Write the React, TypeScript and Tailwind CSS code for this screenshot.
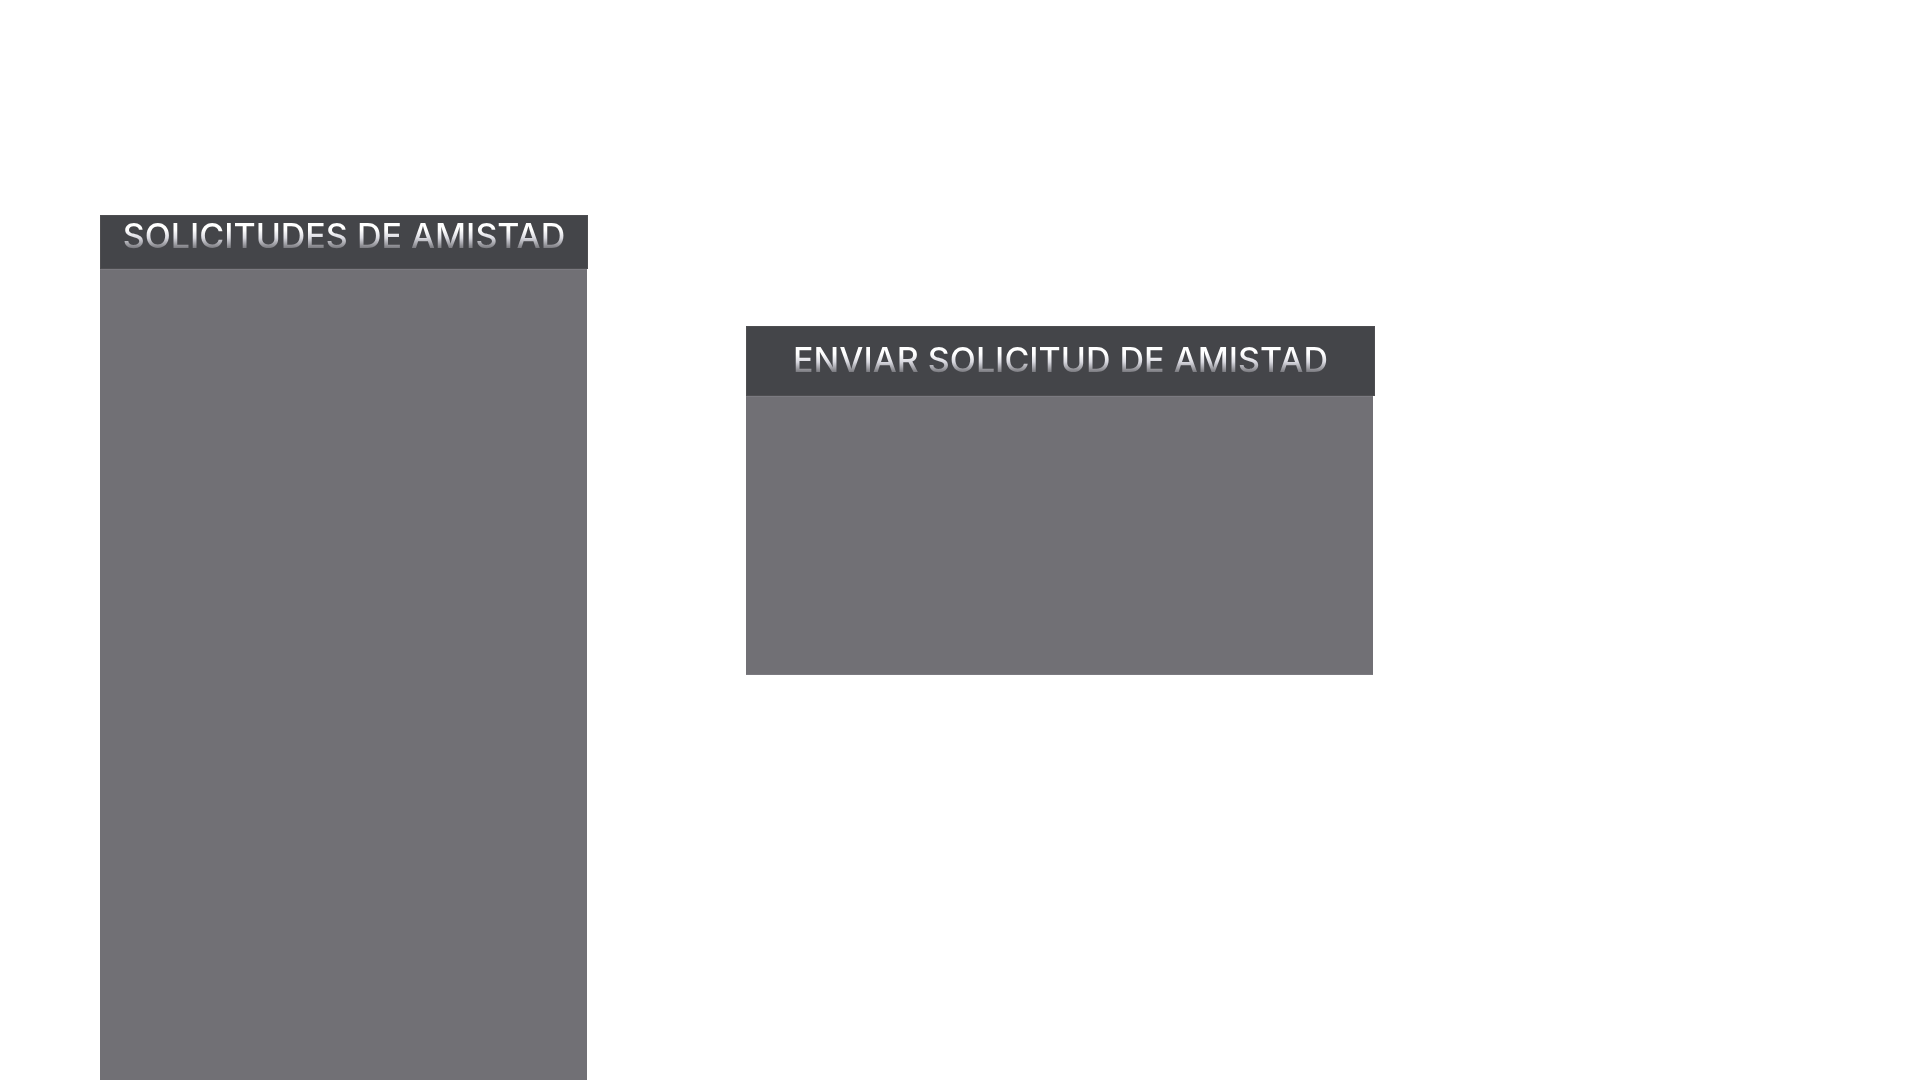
type PanelProps = {
  title: string;
  className: string;
  headerClassName: string;
  bodyClassName: string;
};

function Panel({ title, className, headerClassName, bodyClassName }: PanelProps) {
  return (
    <section className={`flex flex-col ${className}`}>
      <header
        className={`flex items-start justify-center border border-[#4e4e51] bg-[#444549] ${headerClassName}`}
      >
        <h2 className="whitespace-nowrap bg-linear-to-b from-white from-35% via-[#d9d9e0] via-55% to-[#737378] to-82% bg-clip-text text-[34px] leading-10 font-medium text-transparent">
          {title}
        </h2>
      </header>
      <div className={`border-t border-[#7b7a80] bg-[#717075] ${bodyClassName}`} />
    </section>
  );
}

export default function App() {
  return (
    <main className="grid min-h-screen grid-cols-[100fr_488fr_158fr_629fr_545fr] bg-white font-['Inter',sans-serif]">
      <Panel
        title="SOLICITUDES DE AMISTAD"
        className="col-start-2 pt-[215px]"
        headerClassName="h-[54px]"
        bodyClassName="mr-px flex-1"
      />
      <Panel
        title="ENVIAR SOLICITUD DE AMISTAD"
        className="col-start-4 pt-[326px]"
        headerClassName="h-[70px] pt-[13px]"
        bodyClassName="mr-0.5 h-[279px] border-b"
      />
    </main>
  );
}
